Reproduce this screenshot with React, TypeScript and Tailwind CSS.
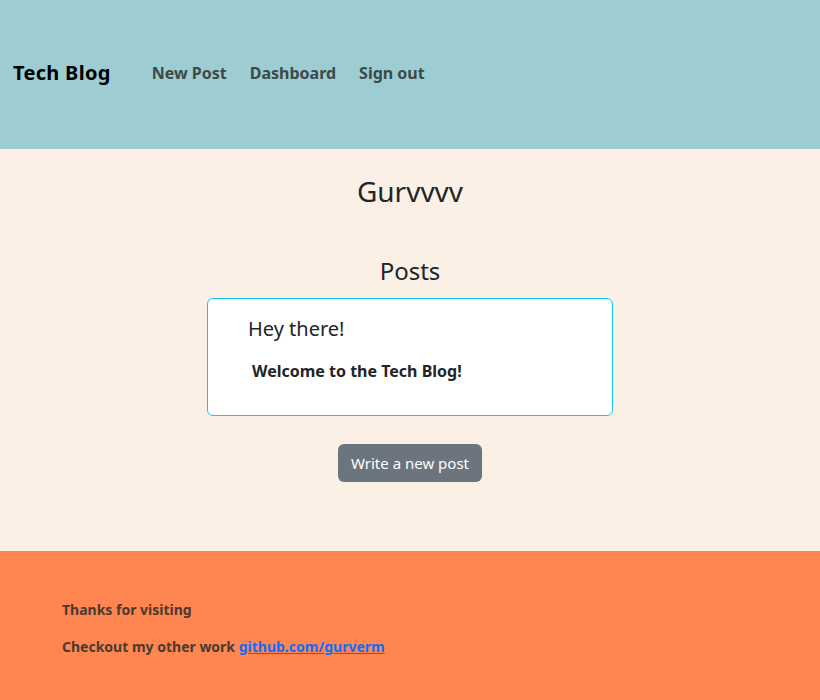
export default function App() {
  return (
    <div className="flex min-h-[700px] flex-col bg-[#faf0e6] font-['Noto_Sans',sans-serif] text-[#212529]">
      <header className="flex h-[149px] items-center bg-[#9dcdd3] px-[13px] pb-[3px]">
        <span className="text-[20px] font-bold tracking-[0.3px] text-black">Tech Blog</span>
        <nav className="ml-[41px] flex gap-[23px] text-[16px] font-bold text-[#3b4a48]">
          <a>New Post</a>
          <a>Dashboard</a>
          <a>Sign out</a>
        </nav>
      </header>

      <main className="flex flex-1 flex-col items-center">
        <h1 className="mt-[23px] text-[28px] leading-[38px]">Gurvvvv</h1>
        <h2 className="mt-[45px] text-[24px] leading-[32px]">Posts</h2>
        <div className="mt-[11px] h-[118px] w-[406px] rounded-[6px] border border-[#0dcaf0] bg-white pl-[40px] pt-[16px]">
          <h3 className="text-[20px] leading-[28px]">Hey there!</h3>
          <p className="mt-[16px] pl-[4px] text-[16px] font-bold">Welcome to the Tech Blog!</p>
        </div>
        <button className="mt-[28px] h-[38px] rounded-[6px] bg-[#6c757d] px-[13px] text-[15px] text-white">
          Write a new post
        </button>
      </main>

      <footer className="h-[149px] bg-[#ff8551] px-[62px] pt-[48px] text-[14px] font-bold text-[#4a3a2f]">
        <p>Thanks for visiting</p>
        <p className="mt-[16px]">
          Checkout my other work{" "}
          <a className="text-[#0d6efd] underline">github.com/gurverm</a>
        </p>
      </footer>
    </div>
  );
}
